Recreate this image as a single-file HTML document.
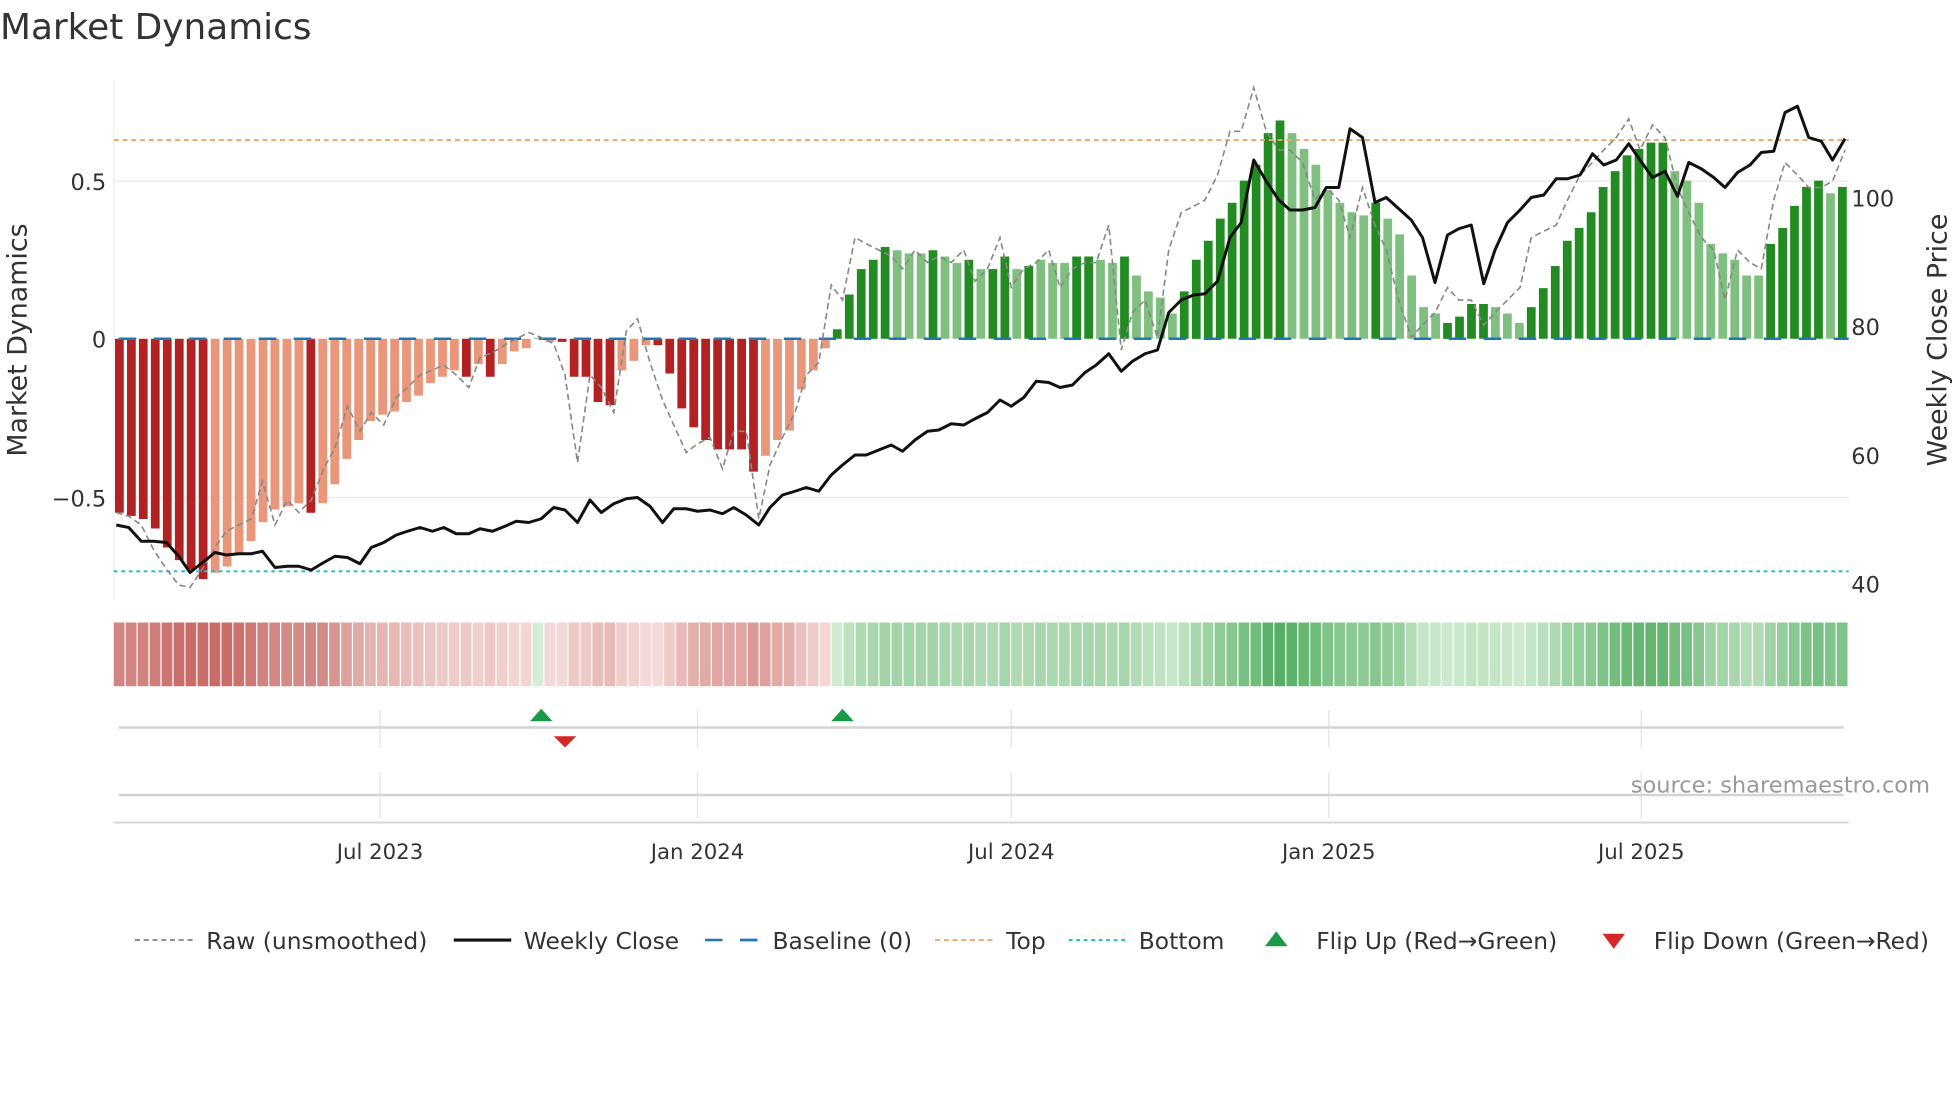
<!DOCTYPE html>
<html><head><meta charset="utf-8"><style>
html,body{margin:0;padding:0;background:#fff;width:1960px;height:1102px;overflow:hidden}
svg{display:block;font-family:"DejaVu Sans","Liberation Sans",sans-serif}
</style></head><body>
<svg id="s" width="1960" height="1102" viewBox="0 0 1568 881.6" xmlns="http://www.w3.org/2000/svg">
<rect width="1568" height="882" fill="#fff"/>
<text x="0" y="31" font-size="28.7" fill="#333">Market Dynamics</text>
<line x1="91" y1="65" x2="91" y2="480" stroke="#eee" stroke-width="1"/>
<line x1="91" y1="145" x2="1479" y2="145" stroke="#e8e8e8" stroke-width="1"/>
<line x1="91" y1="398" x2="1479" y2="398" stroke="#e8e8e8" stroke-width="1"/>
<g font-size="18" fill="#333">
<text x="85" y="152" text-anchor="end">0.5</text>
<text x="85" y="278" text-anchor="end">0</text>
<text x="85" y="405" text-anchor="end">−0.5</text>
<text x="1481" y="165">100</text>
<text x="1481" y="268">80</text>
<text x="1481" y="371">60</text>
<text x="1481" y="474">40</text>
<text transform="translate(21,272) rotate(-90)" text-anchor="middle" font-size="21.5">Market Dynamics</text>
<text transform="translate(1557,272) rotate(-90)" text-anchor="middle" font-size="21.5">Weekly Close Price</text>
</g>
<g id="bars"></g>
<g id="strip"></g>
<line x1="91" y1="112" x2="1479" y2="112" stroke="#eca56a" stroke-width="1.5" stroke-dasharray="4,3"/>
<line x1="91" y1="457" x2="1479" y2="457" stroke="#17becf" stroke-width="1.5" stroke-dasharray="3,3"/>
<line x1="91" y1="271" x2="1479" y2="271" stroke="#1f77b4" stroke-width="2" stroke-dasharray="14,14" stroke-dashoffset="-4"/>
<polyline id="raw" fill="none" stroke="#888" stroke-width="1.3" stroke-dasharray="5,3"/>
<polyline id="close" fill="none" stroke="#111" stroke-width="2.4" stroke-linejoin="round"/>
<g stroke="#e2e2ea" stroke-width="1">
<line x1="304" y1="568" x2="304" y2="598"/><line x1="558" y1="568" x2="558" y2="598"/><line x1="809" y1="568" x2="809" y2="598"/><line x1="1063" y1="568" x2="1063" y2="598"/><line x1="1313" y1="568" x2="1313" y2="598"/>
<line x1="304" y1="618" x2="304" y2="655"/><line x1="558" y1="618" x2="558" y2="655"/><line x1="809" y1="618" x2="809" y2="655"/><line x1="1063" y1="618" x2="1063" y2="655"/><line x1="1313" y1="618" x2="1313" y2="655"/>
</g>
<line x1="95" y1="582" x2="1475" y2="582" stroke="#d4d4d4" stroke-width="2"/>
<line x1="95" y1="636" x2="1475" y2="636" stroke="#d4d4d4" stroke-width="2"/>
<line x1="91" y1="658" x2="1479" y2="658" stroke="#d4d4d4" stroke-width="1.5"/>
<polygon points="424,577 442,577 433,567" fill="#1a9a46"/>
<polygon points="665,577 683,577 674,567" fill="#1a9a46"/>
<polygon points="443,589 461,589 452,598" fill="#d62728"/>
<text x="1544" y="634" text-anchor="end" font-size="18" fill="#999">source: sharemaestro.com</text>
<g font-size="17" fill="#333" text-anchor="middle">
<text x="304" y="687">Jul 2023</text><text x="558" y="687">Jan 2024</text><text x="809" y="687">Jul 2024</text><text x="1063" y="687">Jan 2025</text><text x="1313" y="687">Jul 2025</text>
</g>
<g font-size="18.7" fill="#333">
<line x1="108" y1="752" x2="154" y2="752" stroke="#888" stroke-width="1.5" stroke-dasharray="4,3"/>
<text x="165" y="759">Raw (unsmoothed)</text>
<line x1="363" y1="752" x2="409" y2="752" stroke="#111" stroke-width="2.5"/>
<text x="419" y="759">Weekly Close</text>
<line x1="562" y1="752" x2="608" y2="752" stroke="#1f77b4" stroke-width="2" stroke-dasharray="14,14" stroke-dashoffset="-2"/>
<line x1="592" y1="752" x2="606" y2="752" stroke="#1f77b4" stroke-width="2"/>
<text x="618" y="759">Baseline (0)</text>
<line x1="748" y1="752" x2="794" y2="752" stroke="#eca56a" stroke-width="1.5" stroke-dasharray="4,3"/>
<text x="805" y="759">Top</text>
<line x1="855" y1="752" x2="901" y2="752" stroke="#17becf" stroke-width="1.5" stroke-dasharray="3,3"/>
<text x="911" y="759">Bottom</text>
<polygon points="1012,757 1030,757 1021,745" fill="#1a9a46"/>
<text x="1053" y="759">Flip Up (Red→Green)</text>
<polygon points="1282,747 1300,747 1291,759" fill="#d62728"/>
<text x="1323" y="759">Flip Down (Green→Red)</text>
</g>
</svg>
<script>
var V=[[-.55,1],[-.56,1],[-.57,1],[-.6,1],[-.66,1],[-.7,1],[-.73,1],[-.76,1],[-.74,0],[-.72,0],[-.68,0],[-.64,0],[-.58,0],[-.54,0],[-.53,0],[-.52,0],[-.55,1],[-.52,0],[-.46,0],[-.38,0],[-.32,0],[-.26,0],[-.24,0],[-.23,0],[-.2,0],[-.18,0],[-.14,0],[-.12,0],[-.1,0],[-.12,1],[-.08,0],[-.12,1],[-.08,0],[-.04,0],[-.03,0],[.003,0],[-.01,0],[-.01,1],[-.12,1],[-.12,1],[-.2,1],[-.21,1],[-.1,0],[-.07,0],[-.02,0],[-.02,1],[-.11,1],[-.22,1],[-.28,1],[-.32,1],[-.35,1],[-.35,1],[-.35,1],[-.42,1],[-.37,0],[-.32,0],[-.29,0],[-.16,0],[-.1,0],[-.03,0],
[.03,1],[.14,1],[.22,1],[.25,1],[.29,1],[.28,0],[.27,0],[.27,0],[.28,1],[.26,0],[.24,0],[.25,1],[.22,0],[.22,1],[.26,1],[.22,0],[.23,1],[.25,0],[.24,0],[.24,0],[.26,1],[.26,1],[.25,0],[.24,0],[.26,1],[.2,0],[.15,0],[.13,0],[.08,0],[.15,1],[.25,1],[.31,1],[.38,1],[.43,1],[.5,1],[.55,1],[.65,1],[.69,1],[.65,0],[.6,0],[.55,0],[.47,0],[.43,0],[.4,0],[.39,0],[.43,1],[.38,0],[.33,0],[.2,0],[.1,0],[.08,0],[.05,1],[.07,1],[.11,1],[.11,1],[.1,0],[.08,0],[.05,0],[.1,1],[.16,1],[.23,1],[.31,1],[.35,1],[.4,1],[.48,1],[.53,1],[.58,1],[.6,1],[.62,1],[.62,1],[.53,0],[.5,0],[.43,0],[.3,0],[.27,0],[.25,0],[.2,0],[.2,0],[.3,1],[.35,1],[.42,1],[.48,1],[.5,1],[.46,0],[.48,1]];
var n=V.length,x0=91,x1=1479,st=(x1-x0)/n,b='',s='';
for(var i=0;i<n;i++){var v=V[i][0],d=V[i][1],x=x0+i*st,h=v*253,c;
 if(v<0)c=d?'#b22222':'#e9967a';else c=d?'#228b22':'#7fbf7f';
 var y=v<0?271:271-h;b+='<rect x="'+(x+1).toFixed(1)+'" y="'+y.toFixed(1)+'" width="'+(st-2.6).toFixed(1)+'" height="'+Math.abs(h).toFixed(1)+'" fill="'+c+'"/>';
 var a=Math.min(1,Math.abs(v)/0.72),col;
 if(v<0){col='rgb('+Math.round(244-(244-200)*a)+','+Math.round(220-(220-108)*a)+','+Math.round(218-(218-104)*a)+')';}
 else{col='rgb('+Math.round(215-(215-80)*a)+','+Math.round(238-(238-172)*a)+','+Math.round(215-(215-95)*a)+')';}
 s+='<rect x="'+x.toFixed(1)+'" y="498" width="'+(st-1).toFixed(1)+'" height="51" fill="'+col+'"/>';}
document.getElementById('bars').innerHTML=b;document.getElementById('strip').innerHTML=s;
var C="93,420 103,422 113,433 123,433 133,434 143,445 152,458 162,450 172,442 181,444 191,443 201,443 210,441 220,454 230,453 239,453 249,456 259,450 268,445 278,446 288,451 297,438 307,434 317,428 326,425 336,422 346,425 355,422 365,427 375,427 384,423 394,425 404,421 413,417 423,418 433,415 443,406 452,408 462,418 472,400 481,410 491,403 501,399 510,398 520,405 530,418 539,407 549,407 558,409 568,408 578,411 587,406 597,412 607,420 616,406 626,396 636,393 645,390 655,393 665,380 674,372 684,364 693,364 703,360 713,356 722,361 732,352 742,345 751,344 761,339 771,340 780,335 790,330 800,320 809,325 819,318 829,305 839,306 848,310 858,308 868,298 877,292 887,283 897,297 906,289 916,283 926,280 935,250 945,240 955,236 964,235 974,225 984,190 993,178 1003,128 1013,145 1023,160 1032,168 1042,168 1052,166 1061,150 1071,150 1080,103 1090,110 1100,162 1109,158 1119,167 1129,176 1138,190 1148,226 1158,188 1167,183 1177,180 1187,227 1196,200 1206,178 1216,168 1225,158 1235,156 1245,143 1254,143 1264,140 1274,123 1283,132 1293,128 1303,115 1312,128 1322,142 1332,137 1342,157 1351,130 1361,135 1371,142 1380,150 1390,138 1400,132 1409,122 1419,121 1428,90 1438,85 1447,110 1457,113 1466,128 1476,111";
var R="93,410 103,413 113,420 123,440 133,455 143,468 152,470 162,455 172,438 181,425 191,420 201,415 210,385 220,420 230,400 239,410 249,400 259,375 268,358 278,325 288,345 297,330 307,340 317,318 326,310 336,300 346,296 355,292 365,300 375,310 384,286 394,282 404,276 413,271 423,266 433,270 443,275 452,300 462,370 472,300 481,310 491,330 501,265 510,255 520,290 530,320 539,340 549,362 558,355 568,350 578,375 587,345 597,345 607,415 616,372 626,350 636,330 645,300 655,290 665,228 674,240 684,190 693,195 703,200 713,205 722,215 732,200 742,210 751,205 761,210 771,200 780,225 790,215 800,190 809,230 819,215 829,210 839,200 848,230 858,215 868,210 877,210 887,180 897,280 906,250 916,240 926,270 935,200 945,170 955,165 964,160 974,140 984,105 993,105 1003,70 1013,105 1023,120 1032,120 1042,130 1052,160 1061,150 1071,160 1080,190 1090,150 1100,180 1109,200 1119,240 1129,270 1138,260 1148,250 1158,230 1167,240 1177,240 1187,260 1196,250 1206,240 1216,230 1225,190 1235,185 1245,180 1254,160 1264,140 1274,130 1283,120 1293,110 1303,95 1312,120 1322,100 1332,110 1342,150 1351,170 1361,190 1371,200 1380,240 1390,200 1400,210 1409,215 1419,160 1428,130 1438,140 1447,150 1457,150 1466,145 1476,120";
document.getElementById('close').setAttribute('points',C);document.getElementById('raw').setAttribute('points',R);
</script>
</body></html>
